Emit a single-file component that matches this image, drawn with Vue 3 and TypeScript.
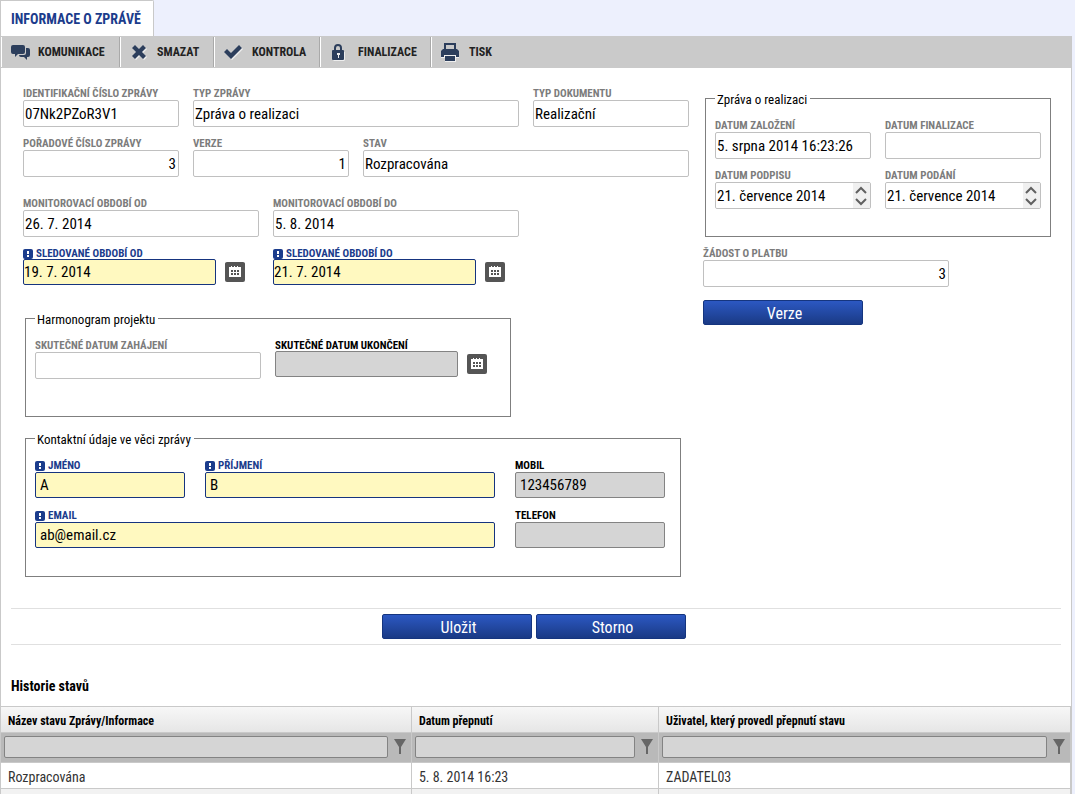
<script setup lang="ts">
import { ref } from 'vue'

interface Column { key: string; title: string; value: string }

const history: Column[] = [
  { key: 'name', title: 'Název stavu Zprávy/Informace', value: 'Rozpracována' },
  { key: 'date', title: 'Datum přepnutí', value: '5. 8. 2014 16:23' },
  { key: 'user', title: 'Uživatel, který provedl přepnutí stavu', value: 'ZADATEL03' },
]

const form = ref({
  id: '07Nk2PZoR3V1',
  type: 'Zpráva o realizaci',
  docType: 'Realizační',
  order: '3',
  version: '1',
  state: 'Rozpracována',
  monFrom: '26. 7. 2014',
  monTo: '5. 8. 2014',
  from: '19. 7. 2014',
  to: '21. 7. 2014',
  started: '',
  finished: '',
  firstName: 'A',
  lastName: 'B',
  mobile: '123456789',
  email: 'ab@email.cz',
  phone: '',
  created: '5. srpna 2014 16:23:26',
  finalized: '',
  signed: '21. července 2014',
  submitted: '21. července 2014',
  payment: '3',
})
</script>

<template>
  <main class="page">
    <nav class="tabs"><a class="tab" href="#zprava">INFORMACE O ZPRÁVĚ</a></nav>

    <div class="panel">
      <div class="toolbar">
        <button type="button" class="tool t1">
          <svg width="20" height="18" viewBox="0 0 20 18"><path d="M2 2h10a2 2 0 0 1 2 2v5a2 2 0 0 1-2 2H7l-3 3v-3H2a2 2 0 0 1-2-2V4a2 2 0 0 1 2-2zM15 5h2a2 2 0 0 1 2 2v5a2 2 0 0 1-2 2h-1v3l-3-3h-3a2 2 0 0 1-2-2h5a2 2 0 0 0 2-2z" /></svg>
          <span>KOMUNIKACE</span>
        </button>
        <button type="button" class="tool t2">
          <svg width="18" height="18" viewBox="0 0 18 18"><path class="hl" d="M2 5l3-3 4 4 4-4 3 3-4 4 4 4-3 3-4-4-4 4-3-3 4-4z" transform="translate(1 1)" /><path d="M2 5l3-3 4 4 4-4 3 3-4 4 4 4-3 3-4-4-4 4-3-3 4-4z" /></svg>
          <span>SMAZAT</span>
        </button>
        <button type="button" class="tool t3">
          <svg width="20" height="18" viewBox="0 0 20 18"><path class="hl" d="M0 9l3-3 4 4 8-8 3 3L7 16z" transform="translate(1 1)" /><path d="M0 9l3-3 4 4 8-8 3 3L7 16z" /></svg>
          <span>KONTROLA</span>
        </button>
        <button type="button" class="tool t4">
          <svg width="16" height="18" viewBox="0 0 16 18"><path class="hl" d="M3 9h12v8l-1 1H4l-1-1z" /><path class="hl" d="M8 9h3v7H8z" /><path fill-rule="evenodd" d="M4 7V5a4 4 0 0 1 8 0v2h1a1 1 0 0 1 1 1v8a1 1 0 0 1-1 1H3a1 1 0 0 1-1-1V8a1 1 0 0 1 1-1zM6 7h4V5a2 2 0 0 0-4 0zM7 10v2h1v3h1v-3h1v-2z" /></svg>
          <span>FINALIZACE</span>
        </button>
        <button type="button" class="tool t5">
          <svg width="18" height="18" viewBox="0 0 18 18"><path class="hl" d="M0 9h18v6h-3v4H4v-4H0z" /><path fill-rule="evenodd" d="M3 0h12v6h1l2 2v6h-3v-2H3v2H0V8l2-2h1zM5 2v4h8V2zM4 13h10v5H4z" /></svg>
          <span>TISK</span>
        </button>
      </div>

      <form class="form" @submit.prevent>
        <div class="left">
          <div class="row r1">
            <div class="field"><label for="id">IDENTIFIKAČNÍ ČÍSLO ZPRÁVY</label><input id="id" v-model="form.id" readonly></div>
            <div class="field"><label for="type">TYP ZPRÁVY</label><input id="type" v-model="form.type" readonly></div>
            <div class="field"><label for="doc">TYP DOKUMENTU</label><input id="doc" v-model="form.docType" readonly></div>
          </div>
          <div class="row r2">
            <div class="field"><label for="order">POŘADOVÉ ČÍSLO ZPRÁVY</label><input id="order" v-model="form.order" class="num" readonly></div>
            <div class="field"><label for="version">VERZE</label><input id="version" v-model="form.version" class="num" readonly></div>
            <div class="field"><label for="state">STAV</label><input id="state" v-model="form.state" readonly></div>
          </div>
          <div class="row r3 spaced">
            <div class="field"><label for="mf">MONITOROVACÍ OBDOBÍ OD</label><input id="mf" v-model="form.monFrom" readonly></div>
            <div class="field"><label for="mt">MONITOROVACÍ OBDOBÍ DO</label><input id="mt" v-model="form.monTo" readonly></div>
          </div>
          <div class="row r3">
            <div class="field required">
              <label for="from"><svg class="mark" width="10" height="10" viewBox="0 0 10 10"><rect width="10" height="10" rx="2" /><path d="M4 2h2v3H4zM4 6h2v2H4z" /></svg>SLEDOVANÉ OBDOBÍ OD</label>
              <div class="picker"><input id="from" v-model="form.from"><button type="button" class="cal" aria-label="Kalendář"><svg width="12" height="12" viewBox="0 0 12 12"><path fill-rule="evenodd" d="M0 1h2V0h1v1h2V0h1v1h2V0h1v1h3v10H0zM2 4v2h2V4zM5 4v2h2V4zM8 4v2h2V4zM2 7v2h2V7zM5 7v2h2V7zM8 7v2h2V7z" /></svg></button></div>
            </div>
            <div class="field required">
              <label for="to"><svg class="mark" width="10" height="10" viewBox="0 0 10 10"><rect width="10" height="10" rx="2" /><path d="M4 2h2v3H4zM4 6h2v2H4z" /></svg>SLEDOVANÉ OBDOBÍ DO</label>
              <div class="picker"><input id="to" v-model="form.to"><button type="button" class="cal" aria-label="Kalendář"><svg width="12" height="12" viewBox="0 0 12 12"><path fill-rule="evenodd" d="M0 1h2V0h1v1h2V0h1v1h2V0h1v1h3v10H0zM2 4v2h2V4zM5 4v2h2V4zM8 4v2h2V4zM2 7v2h2V7zM5 7v2h2V7zM8 7v2h2V7z" /></svg></button></div>
            </div>
          </div>

          <fieldset class="schedule">
            <legend>Harmonogram projektu</legend>
            <div class="row r-schedule">
              <div class="field"><label for="started">SKUTEČNÉ DATUM ZAHÁJENÍ</label><input id="started" v-model="form.started" readonly></div>
              <div class="field optional">
                <label for="finished">SKUTEČNÉ DATUM UKONČENÍ</label>
                <div class="picker"><input id="finished" v-model="form.finished"><button type="button" class="cal" aria-label="Kalendář"><svg width="12" height="12" viewBox="0 0 12 12"><path fill-rule="evenodd" d="M0 1h2V0h1v1h2V0h1v1h2V0h1v1h3v10H0zM2 4v2h2V4zM5 4v2h2V4zM8 4v2h2V4zM2 7v2h2V7zM5 7v2h2V7zM8 7v2h2V7z" /></svg></button></div>
              </div>
            </div>
          </fieldset>

          <fieldset class="contact">
            <legend>Kontaktní údaje ve věci zprávy</legend>
            <div class="r-contact">
              <div class="field required roomy"><label for="fn"><svg class="mark" width="10" height="10" viewBox="0 0 10 10"><rect width="10" height="10" rx="2" /><path d="M4 2h2v3H4zM4 6h2v2H4z" /></svg>JMÉNO</label><input id="fn" v-model="form.firstName"></div>
              <div class="field required roomy"><label for="ln"><svg class="mark" width="10" height="10" viewBox="0 0 10 10"><rect width="10" height="10" rx="2" /><path d="M4 2h2v3H4zM4 6h2v2H4z" /></svg>PŘÍJMENÍ</label><input id="ln" v-model="form.lastName"></div>
              <div class="field optional roomy"><label for="mobile">MOBIL</label><input id="mobile" v-model="form.mobile"></div>
              <div class="field required roomy wide"><label for="email"><svg class="mark" width="10" height="10" viewBox="0 0 10 10"><rect width="10" height="10" rx="2" /><path d="M4 2h2v3H4zM4 6h2v2H4z" /></svg>EMAIL</label><input id="email" v-model="form.email"></div>
              <div class="field optional roomy"><label for="phone">TELEFON</label><input id="phone" v-model="form.phone"></div>
            </div>
          </fieldset>
        </div>

        <div class="right">
          <fieldset class="report">
            <legend>Zpráva o realizaci</legend>
            <div class="r-report">
              <div class="field"><label for="created">DATUM ZALOŽENÍ</label><input id="created" v-model="form.created" readonly></div>
              <div class="field"><label for="finalized">DATUM FINALIZACE</label><input id="finalized" v-model="form.finalized" readonly></div>
              <div class="field"><label for="signed">DATUM PODPISU</label>
                <div class="spin"><input id="signed" v-model="form.signed" readonly><span class="arrows"><svg width="17" height="25" viewBox="0 0 17 25"><path d="M3 10l5-5 5 5M3 16l5 5 5-5" /></svg></span></div>
              </div>
              <div class="field"><label for="submitted">DATUM PODÁNÍ</label>
                <div class="spin"><input id="submitted" v-model="form.submitted" readonly><span class="arrows"><svg width="17" height="25" viewBox="0 0 17 25"><path d="M3 10l5-5 5 5M3 16l5 5 5-5" /></svg></span></div>
              </div>
            </div>
          </fieldset>
          <div class="field payment"><label for="payment">ŽÁDOST O PLATBU</label><input id="payment" v-model="form.payment" class="num" readonly></div>
          <button type="button" class="primary verze">Verze</button>
        </div>
      </form>

      <div class="actions">
        <button type="button" class="primary">Uložit</button>
        <button type="button" class="primary">Storno</button>
      </div>

      <h2>Historie stavů</h2>
      <table>
        <colgroup><col class="c1"><col class="c2"><col></colgroup>
        <thead>
          <tr class="titles"><th v-for="c in history" :key="c.key" scope="col">{{ c.title }}</th></tr>
          <tr class="filters">
            <td v-for="c in history" :key="c.key">
              <div class="filter">
                <input :aria-label="c.title" type="text">
                <button type="button" aria-label="Filtr"><svg width="12" height="16" viewBox="0 0 12 16"><path d="M0 0h12L7 8v7H5V8z" /></svg></button>
              </div>
            </td>
          </tr>
        </thead>
        <tbody>
          <tr class="data"><td v-for="c in history" :key="c.key">{{ c.value }}</td></tr>
          <tr class="blank"><td v-for="c in history" :key="c.key"></td></tr>
        </tbody>
      </table>
    </div>
  </main>
</template>

<style>
html, body { background: #edf0fd; }
</style>

<style scoped>
* { box-sizing: border-box; }
.page, button, input { font-family: "Roboto Condensed", "Liberation Sans Narrow", Roboto, sans-serif; }
.page { color: #000; min-height: 100vh; display: flex; flex-direction: column; }
button { cursor: pointer; margin: 0; }
.tabs { display: flex; height: 36px; }
.tab { display: flex; align-items: center; padding: 0 12px 0 10px; border: 1px solid #c9c9c9; border-bottom: 0; border-top-right-radius: 2px; background: #fff; color: #1b3c8c; font-size: 14px; font-weight: 700; text-decoration: none; white-space: nowrap; }
.panel { flex: 1; margin-right: 3px; border: solid #c9c9c9; border-width: 0 1px; background: #fff; }

.toolbar { display: flex; height: 32px; padding: 1px 0; background: #cacaca; }
.tool { display: flex; align-items: center; border: 0; border-left: 1px solid #fff; padding: 0 0 0 9px; background: none; font-size: 12px; font-weight: 700; color: #222; white-space: nowrap; text-align: left; }
.tool svg { flex: none; margin-right: 7px; fill: #2c3e5c; overflow: visible; }
.tool .hl { fill: #eee; }
.tool + .tool { box-shadow: -1px 0 #a9a9a9; }
.t1 { width: 119px; }
.t2 { width: 94px; }
.t3 { width: 106px; }
.t4 { width: 111px; }
.t2 svg { margin-right: 9px; }
.t3 svg { margin-right: 8px; }
.t4 svg { margin-right: 12px; }
.t5 svg { margin-right: 10px; }

.form { display: grid; grid-template-columns: 666fr 348fr; gap: 14px; padding: 18px 20px 0 22px; }
.left, .right { min-width: 0; }
.row { display: grid; gap: 14px; margin-bottom: 9px; }
.r1 { grid-template-columns: 156fr 326fr 156fr; }
.r2 { grid-template-columns: 156fr 156fr 326fr; }
.r3 { grid-template-columns: 236fr 246fr 156fr; }
.spaced { margin-top: 19px; }
.field { min-width: 0; height: 41px; }
label { display: flex; align-items: center; height: 14px; padding-top: 2px; font-size: 11px; line-height: 12px; font-weight: 700; color: #7c7c7c; white-space: nowrap; }
input { display: block; width: 100%; height: 27px; padding: 0 2px 0 1px; border: 1px solid #c0c0c0; border-radius: 2px; background: #fff; font-size: 15px; color: #000; outline: 0; }
.num { text-align: right; }
.required label { color: #1b3c8c; }
.required input { height: 26px; border-color: #16347f; background: #fff9c0; padding: 0; }
.optional label { color: #000; }
.optional input { height: 26px; border-color: #838383; background: #d5d5d5; }
.roomy input { padding: 0 4px; }
.mark { margin-right: 3px; fill: #1b3c8c; }
.mark path { fill: #fff; }
.picker { display: flex; align-items: center; gap: 9px; margin-top: -1px; padding-right: 14px; }
.picker input { flex: 1; min-width: 0; }
.cal { display: flex; align-items: center; justify-content: center; flex: none; width: 20px; height: 20px; padding: 0; border: 0; border-radius: 2px; background: #555; }
.cal svg { fill: #fff; }

fieldset { min-width: 0; margin: 0; border: 1px solid #7f7f7f; padding: 12px 9px 27px; }
legend { height: 15px; margin-left: 0; padding: 0 3px 0 2px; font-size: 13px; line-height: 17px; white-space: nowrap; }
.schedule { width: 73%; margin: 24px 0 0 2px; padding-bottom: 28px; }
.r-schedule { grid-template-columns: 226fr 226fr; }
.contact { margin: 14px 8px 0 2px; padding-right: 15px; }
.r-contact { display: grid; grid-template-columns: 150fr 290fr 150fr; gap: 9px 20px; }
.wide { grid-column: span 2; }
.report { margin: 5px 0 9px 2px; }
.r-report { display: grid; grid-template-columns: 1fr 1fr; gap: 9px 14px; }
.spin { display: flex; border: 1px solid #c0c0c0; border-radius: 2px; }
.spin input { flex: 1; min-width: 0; height: 25px; border: 0; }
.arrows { display: flex; background: #f0f0f0; }
.arrows svg { fill: none; stroke: #606060; stroke-width: 2; }
.payment { width: 246px; }

.primary { width: 150px; height: 25px; padding: 2px 0 0 3px; border: 1px solid #15357f; border-radius: 2px; background: linear-gradient(#2c58c2, #1a3a85); color: #fff; font-size: 16px; }
.verze { width: 160px; margin-top: 13px; }
.actions { display: flex; justify-content: center; gap: 4px; margin: 31px 10px 0; padding: 5px 4px 5px 0; border: solid #e0e0e0; border-width: 1px 0; }

h2 { margin: 32px 0 0; padding-left: 10px; height: 29px; font-size: 14px; line-height: 18px; font-weight: 700; }
table { width: 100%; table-layout: fixed; border-collapse: separate; border-spacing: 0; border-top: 1px solid #c9c9c9; }
.c1 { width: 38.4%; }
.c2 { width: 23.1%; }
th, td { padding: 2px 6px 0 7px; border: solid #c9c9c9; border-width: 0 1px 1px 0; text-align: left; }
.titles th { height: 26px; background: linear-gradient(#f7f7f7, #e6e6e6); font-size: 12px; }
.filters td { height: 30px; padding: 0 5px 2px 3px; background: #b9b9b9; }
.filter { display: flex; align-items: center; gap: 6px; }
.filter input { flex: 1; min-width: 0; height: 22px; border-color: #838383; background: #d5d5d5; }
.filter button { flex: none; display: flex; padding: 0; border: 0; background: none; }
.filter svg { fill: #666; }
.data td { height: 26px; font-size: 14px; color: #333; }
.blank td { height: 5px; background: #f2f2f2; border-bottom: 0; }
</style>
